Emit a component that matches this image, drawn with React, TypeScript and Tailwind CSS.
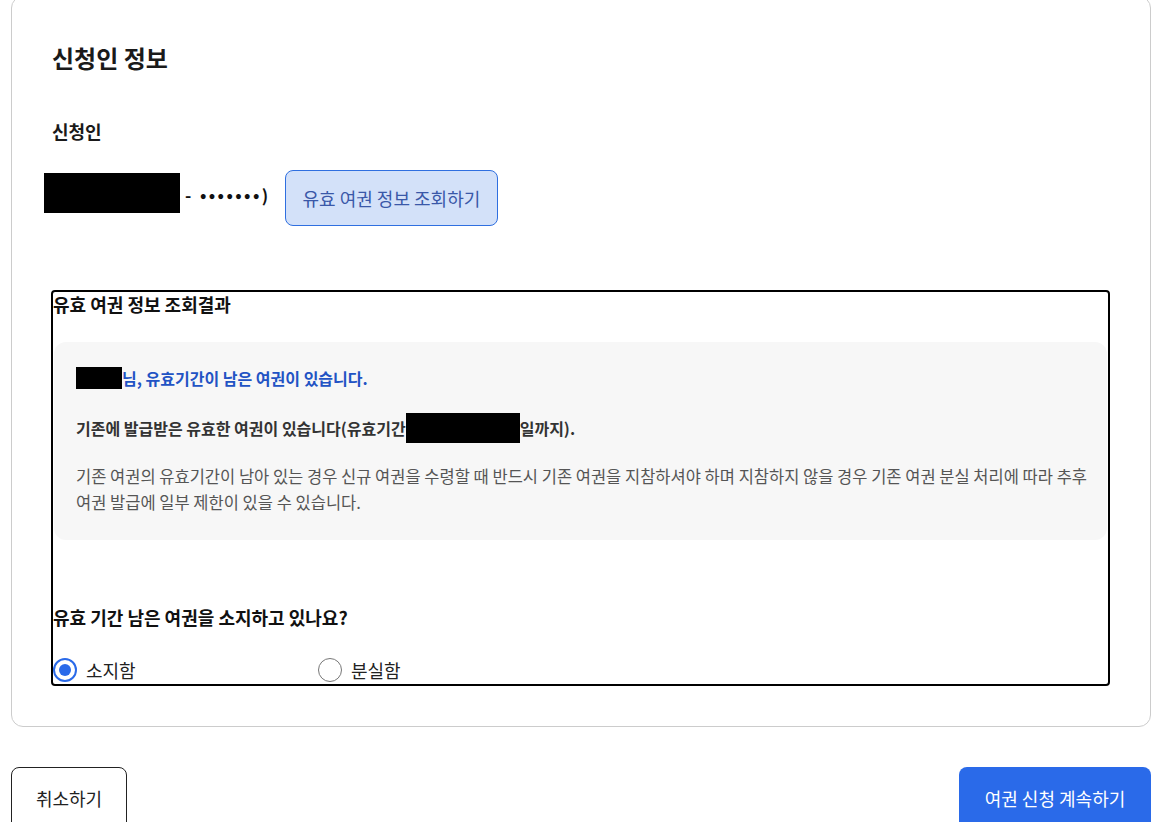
import React from "react";

const font = { fontFamily: '"Noto Sans CJK KR", "Noto Sans", sans-serif' };

export default function App() {
  return (
    <div className="w-[1151px] bg-white text-[#111]" style={font}>
      <div className="ml-[11px] mt-[-4px] border border-[#cccccc] rounded-[12px] px-[40px] pt-[45px] pb-[40px]">
        <h2 className="text-[24px] font-bold leading-[32px] text-[#1a1a1a]">신청인 정보</h2>
        <div className="mt-[45px] text-[18px] font-bold leading-[24px] text-[#1a1a1a]">신청인</div>
        <div className="mt-[27px] flex items-start">
          <div className="flex items-start mt-[3px]">
            <span className="inline-block w-[136px] h-[40px] bg-black ml-[-8px]"></span>
            <span className="ml-[5px] mt-[10px] text-[17px] leading-[24px] font-bold tracking-[2.4px]">- •••••••)</span>
          </div>
          <button className="ml-[14px] h-[56px] px-[17px] rounded-[8px] border border-[#2f6fe0] bg-[#d3e1f9] text-[18px] text-[#3a58a8]">
            유효 여권 정보 조회하기
          </button>
        </div>
        <div className="mt-[64px] border-2 border-black rounded-[4px] h-[396px] ml-[-1px]">
          <div className="text-[18px] font-bold leading-[24px] text-[#111]">유효 여권 정보 조회결과</div>
          <div className="mt-[26px] mx-[1px] bg-[#f7f7f7] rounded-[12px] pl-[22px] pr-[16px] pt-[24px] pb-[25px]">
            <div className="flex items-center h-[24px] text-[16px] font-bold text-[#2253c4]">
              <span className="inline-block w-[46px] h-[22px] bg-black"></span>
              <span>님, 유효기간이 남은 여권이 있습니다.</span>
            </div>
            <div className="mt-[23px] flex items-center h-[30px] text-[16px] font-bold text-[#333]">
              <span>기존에 발급받은 유효한 여권이 있습니다(유효기간</span>
              <span className="inline-block w-[114px] h-[30px] bg-black"></span>
              <span>일까지).</span>
            </div>
            <p className="mt-[20px] text-[16.5px] leading-[26px] text-[#555] break-keep">
              기존 여권의 유효기간이 남아 있는 경우 신규 여권을 수령할 때 반드시 기존 여권을 지참하셔야 하며 지참하지 않을 경우 기존 여권 분실 처리에 따라 추후 여권 발급에 일부 제한이 있을 수 있습니다.
            </p>
          </div>
          <div className="mt-[65px] text-[18px] font-bold leading-[24px] text-[#111]">유효 기간 남은 여권을 소지하고 있나요?</div>
          <div className="mt-[29px] flex items-center h-[24px]">
            <label className="flex items-center w-[265px]">
              <span className="w-[24px] h-[24px] rounded-full border-2 border-[#2a6ae9] flex items-center justify-center bg-white">
                <span className="w-[12px] h-[12px] rounded-full bg-[#2a6ae9]"></span>
              </span>
              <span className="ml-[9px] text-[18px] text-[#222]">소지함</span>
            </label>
            <label className="flex items-center">
              <span className="w-[24px] h-[24px] rounded-full border border-[#777] bg-white"></span>
              <span className="ml-[9px] text-[18px] text-[#222]">분실함</span>
            </label>
          </div>
        </div>
      </div>
      <div className="mt-[40px] ml-[11px] flex justify-between">
        <button className="w-[116px] h-[64px] border border-[#222] rounded-[8px] text-[18px] text-[#222] pb-[2px]">취소하기</button>
        <button className="w-[192px] h-[64px] rounded-[8px] bg-[#2a6ae9] text-[18px] text-white pb-[2px]">여권 신청 계속하기</button>
      </div>
    </div>
  );
}
